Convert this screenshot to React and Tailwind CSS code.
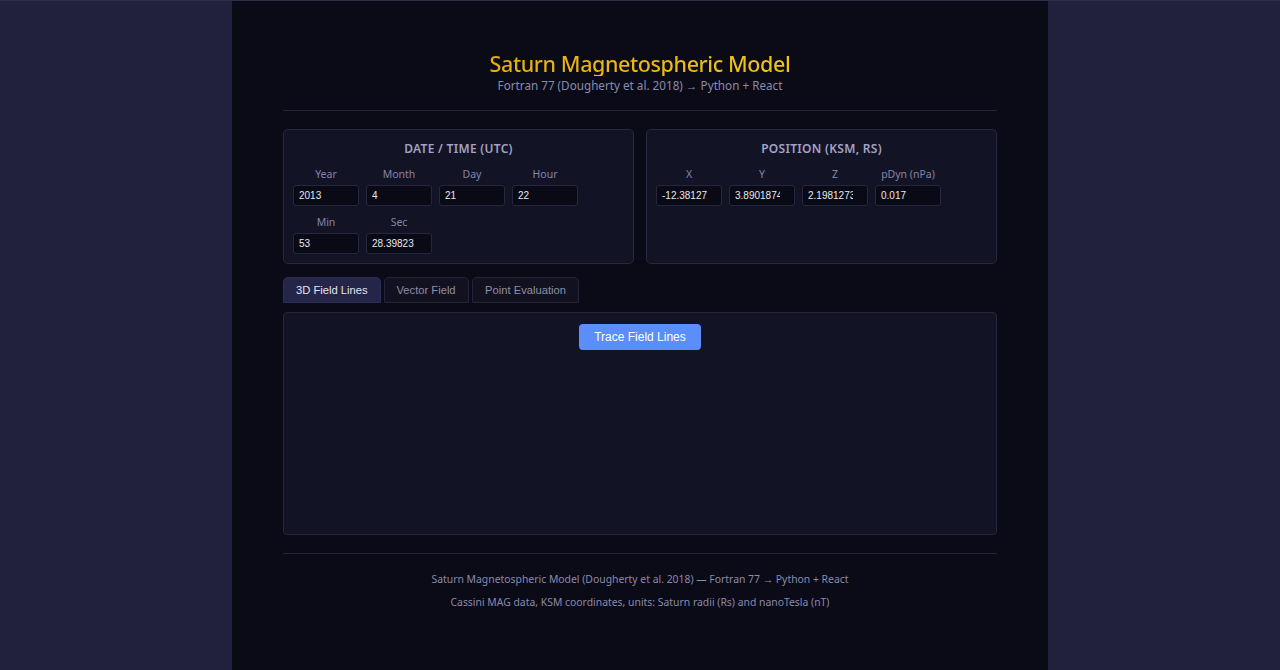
import React from "react";

const ui = { fontFamily: '"Noto Sans", "Open Sans", sans-serif' };
const arial = { fontFamily: '"Liberation Sans", Arial, sans-serif' };

function Field({ label, value }) {
  return (
    <div className="flex w-[66px] flex-col items-center">
      <div className="mb-[4px] text-[10.5px] leading-[14px] text-[#8484a6]" style={ui}>
        {label}
      </div>
      <input
        readOnly
        value={value}
        className="h-[21px] w-full rounded-[3px] border border-[#26263f] bg-[#0a0a16] pl-[5px] pr-[14px] text-[10px] text-[#e8e8f0] outline-none"
        style={arial}
      />
    </div>
  );
}

function Card({ title, rows }) {
  return (
    <div className="flex h-[135px] flex-col rounded-[5px] border border-[#27273f] bg-[#131326] px-[9px] pt-[11px]">
      <div
        className="mb-[10px] text-center text-[12px] font-semibold uppercase leading-[16px] tracking-[0.3px] text-[#a2a2c2]"
        style={ui}
      >
        {title}
      </div>
      <div className="flex flex-col gap-[9px]">
        {rows.map((row, i) => (
          <div key={i} className="flex gap-[7px]">
            {row.map(([l, v]) => (
              <Field key={l} label={l} value={v} />
            ))}
          </div>
        ))}
      </div>
    </div>
  );
}

export default function App() {
  return (
    <div className="min-h-[670px] border-t border-[#2d2d4a] bg-[#21213d]">
      <div className="mx-auto min-h-[669px] w-[816px] bg-[#0b0b18] px-[51px] pt-[48px]">
        <div className="flex flex-col items-center">
          <div className="h-[27px] overflow-hidden">
            <div
              className="bg-gradient-to-r from-[#e6ae0e] to-[#f0c41c] bg-clip-text text-[21.5px] font-medium leading-[30px] tracking-[-0.4px] text-transparent"
              style={ui}
            >
              Saturn Magnetospheric Model
            </div>
          </div>
          <div className="mt-[1px] text-[11.7px] leading-[16px] text-[#8a8aac]" style={ui}>
            Fortran 77 (Dougherty et al. 2018) → Python + React
          </div>
        </div>

        <div className="mt-[17px] h-px bg-[#23233a]" />

        <div className="mt-[18px] grid grid-cols-2 gap-[12px]">
          <Card
            title="Date / Time (UTC)"
            rows={[
              [
                ["Year", "2013"],
                ["Month", "4"],
                ["Day", "21"],
                ["Hour", "22"],
              ],
              [
                ["Min", "53"],
                ["Sec", "28.39823"],
              ],
            ]}
          />
          <Card
            title="Position (KSM, Rs)"
            rows={[
              [
                ["X", "-12.38127"],
                ["Y", "3.8901874"],
                ["Z", "2.1981273"],
                ["pDyn (nPa)", "0.017"],
              ],
            ]}
          />
        </div>

        <div className="mt-[13px] flex gap-[3px]" style={arial}>
          <button className="h-[26px] rounded-t-[5px] border border-[#2e2e52] bg-[#25254a] px-[12px] text-[11.2px] text-[#e4e4f0]">
            3D Field Lines
          </button>
          <button className="h-[26px] rounded-t-[5px] border border-[#23233a] bg-[#11111f] px-[12px] text-[11.2px] text-[#8e8eaa]">
            Vector Field
          </button>
          <button className="h-[26px] rounded-t-[5px] border border-[#23233a] bg-[#11111f] px-[12.5px] text-[11.2px] text-[#8e8eaa]">
            Point Evaluation
          </button>
        </div>

        <div className="mt-[9px] flex h-[223px] justify-center rounded-[4px] border border-[#25253d] bg-[#131326] pt-[11px]">
          <button
            className="h-[26px] w-[122px] rounded-[4px] bg-[#5b8dfb] text-[12px] text-white"
            style={arial}
          >
            Trace Field Lines
          </button>
        </div>

        <div className="mt-[18px] h-px bg-[#23233a]" />

        <div className="mt-[17px] flex flex-col items-center gap-[7px] text-[10.4px] leading-[16px] text-[#8a8aac]" style={ui}>
          <div>Saturn Magnetospheric Model (Dougherty et al. 2018) — Fortran 77 → Python + React</div>
          <div>Cassini MAG data, KSM coordinates, units: Saturn radii (Rs) and nanoTesla (nT)</div>
        </div>
      </div>
    </div>
  );
}
